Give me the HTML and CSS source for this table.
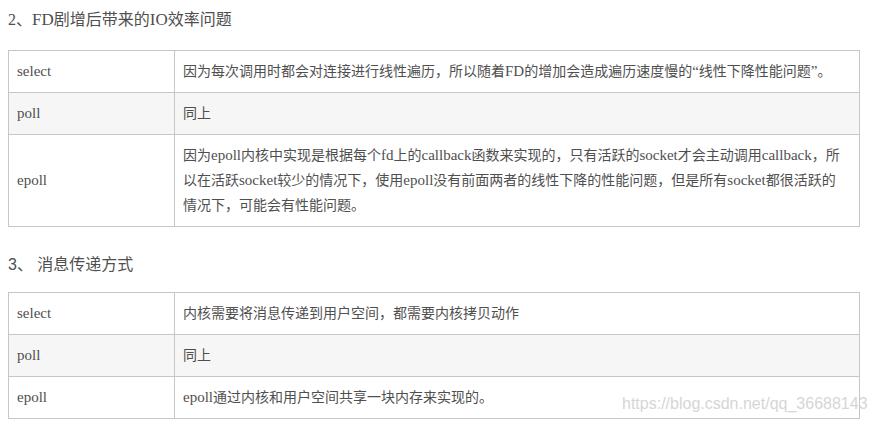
FILE: index.html
```html
<!DOCTYPE html>
<html lang="zh-CN">
<head>
<meta charset="utf-8">
<link rel="stylesheet" href="styles.css">
</head>
<body>
<div class="page">
  <h3 class="heading heading-first">2、<span class="en">FD</span>剧增后带来的<span class="en">IO</span>效率问题</h3>
  <table class="cmp">
    <tr><td class="name"><span class="en">select</span></td><td class="desc">因为每次调用时都会对连接进行线性遍历，所以随着<span class="en">FD</span>的增加会造成遍历速度慢的<span class="en">“</span>线性下降性能问题<span class="en">”</span>。</td></tr>
    <tr class="alt"><td class="name"><span class="en">poll</span></td><td class="desc">同上</td></tr>
    <tr><td class="name"><span class="en">epoll</span></td><td class="desc">因为<span class="en">epoll</span>内核中实现是根据每个<span class="en">fd</span>上的<span class="en">callback</span>函数来实现的，只有活跃的<span class="en">socket</span>才会主动调用<span class="en">callback</span>，所以在活跃<span class="en">socket</span>较少的情况下，使用<span class="en">epoll</span>没有前面两者的线性下降的性能问题，但是所有<span class="en">socket</span>都很活跃的情况下，可能会有性能问题。</td></tr>
  </table>
  <h3 class="heading heading-second">3、 消息传递方式</h3>
  <table class="cmp">
    <tr><td class="name"><span class="en">select</span></td><td class="desc">内核需要将消息传递到用户空间，都需要内核拷贝动作</td></tr>
    <tr class="alt"><td class="name"><span class="en">poll</span></td><td class="desc">同上</td></tr>
    <tr><td class="name"><span class="en">epoll</span></td><td class="desc"><span class="en">epoll</span>通过内核和用户空间共享一块内存来实现的。</td></tr>
  </table>
  <div class="watermark">https://blog.csdn.net/qq_36688143</div>
</div>
</body>
</html>
```
FILE: styles.css
```css
html, body {
  margin: 0;
  padding: 0;
  background: #ffffff;
}
.page {
  position: relative;
  padding: 8px 16px 0 8px;
  width: 851px;
  height: 419px;
  color: #4f4f4f;
  font-family: "Liberation Serif", "Noto Sans CJK SC", serif;
}
.heading {
  margin: 0;
  font-size: 16px;
  line-height: 24px;
  font-weight: normal;
  color: #4f4f4f;
}
.heading .en {
  font-size: 17px;
}
.heading-first {
  margin-bottom: 18px;
}
.heading-second {
  margin-top: 26px;
  margin-bottom: 15px;
  font-family: "Liberation Sans", "Noto Sans CJK SC", sans-serif;
}
.cmp {
  width: 852px;
  border-collapse: collapse;
  font-size: 14px;
  line-height: 25px;
}
.cmp .en {
  font-size: 15px;
}
.cmp td {
  border: 1px solid #c6c6c6;
  padding: 8px 8px;
  vertical-align: middle;
}
.cmp td.desc {
  padding-right: 13px;
}
.cmp td.name {
  width: 149px;
}
.cmp tr.alt td {
  background: #f6f6f6;
}
.watermark {
  position: absolute;
  left: 622px;
  top: 395px;
  font-family: "Liberation Sans", sans-serif;
  font-size: 16px;
  color: #d6d6d6;
  white-space: nowrap;
}
```
